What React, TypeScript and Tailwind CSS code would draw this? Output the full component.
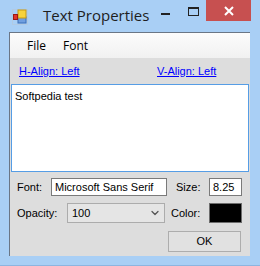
import { ChevronDown } from 'lucide-react'

const ui = { fontFamily: '"Liberation Sans", Arial, sans-serif' }
const segoe = { fontFamily: '"Open Sans", "Noto Sans", sans-serif' }

const AppIcon = () => (
  <svg width="16" height="16" viewBox="0 0 16 16" className="mt-[9px] ml-[12px]">
    <rect x="0.5" y="0.5" width="15" height="15" fill="none" stroke="#b9c4d0" strokeDasharray="1 1" />
    <rect x="6" y="8" width="8" height="6" fill="#6f9fe0" stroke="#3d6fb8" />
    <rect x="6" y="1" width="8" height="8" fill="#f7d33c" stroke="#c79a12" />
    <rect x="1.5" y="5.5" width="4" height="5" fill="#e0352b" stroke="#9b1a14" />
  </svg>
)

const App = () => {
  return (
    <div className="w-[260px] h-[266px] bg-[#a9cff5] border-b border-[#8db5e0] flex flex-col" style={ui}>
      {/* title bar */}
      <div className="h-[32px] flex items-start shrink-0">
        <AppIcon />
        <div className="ml-[15px] mt-[4px] text-[15px] text-[#1e1e1e]" style={segoe}>Text Properties</div>
        <div className="ml-auto flex items-start">
          <div className="w-[9px] h-[2px] bg-[#222] mt-[13px] mr-[18px]" />
          <div className="w-[11px] h-[9px] border border-[#222] border-t-2 mt-[7px] mr-[7px]" />
          <div className="w-[45px] h-[21px] bg-[#c75050] flex items-center justify-center mr-[9px]">
            <svg width="10" height="10" viewBox="0 0 10 10">
              <path d="M1 1L9 9M9 1L1 9" stroke="#fff" strokeWidth="2" />
            </svg>
          </div>
        </div>
      </div>

      {/* client area */}
      <div className="ml-[9px] w-[241px] h-[224px] border-l border-t border-[#6a7686] bg-[#dddddd] flex flex-col">
        <div className="h-[25px] bg-gradient-to-b from-[#fcfcfc] to-[#f1f1f1] flex items-center text-[12px] text-black shrink-0" style={segoe}>
          <span className="ml-[17px] w-[36px]">File</span>
          <span>Font</span>
        </div>

        <div className="h-[26px] flex items-center text-[11px] text-[#0000ff] shrink-0">
          <span className="ml-[9px] w-[138px]"><span className="underline">H-Align: Left</span></span>
          <span className="underline">V-Align: Left</span>
        </div>

        <div className="ml-[1px] w-[238px] h-[88px] bg-white border border-[#569de5] px-[3px] py-[3px] text-[11px] text-black shrink-0">
          Softpedia test
        </div>

        <div className="mt-[6px] h-[18px] flex items-center text-[11px] text-black">
          <span className="ml-[7px] w-[34px]">Font:</span>
          <div className="w-[116px] h-[18px] bg-white border border-[#7a7a7a] flex items-center px-[3px]">Microsoft Sans Serif</div>
          <span className="ml-[9px] w-[33px]">Size:</span>
          <div className="w-[33px] h-[18px] bg-white border border-[#7a7a7a] flex items-center px-[3px]">8.25</div>
        </div>

        <div className="mt-[7px] h-[20px] flex items-center text-[11px] text-black">
          <span className="ml-[7px] w-[50px]">Opacity:</span>
          <div className="w-[98px] h-[20px] bg-[#e5e5e5] border border-[#acacac] flex items-center pl-[4px] pr-[3px]">
            <span>100</span>
            <ChevronDown size={12} strokeWidth={2.5} className="ml-auto text-[#555]" />
          </div>
          <span className="ml-[6px] w-[38px]">Color:</span>
          <div className="w-[33px] h-[20px] bg-black border border-[#6d6d6d]" />
        </div>

        <div className="mt-[8px] flex">
          <div className="ml-[158px] w-[73px] h-[21px] bg-[#e1e1e1] border border-[#adadad] flex items-center justify-center text-[11px] text-black">
            OK
          </div>
        </div>
      </div>
    </div>
  )
}

export default App
